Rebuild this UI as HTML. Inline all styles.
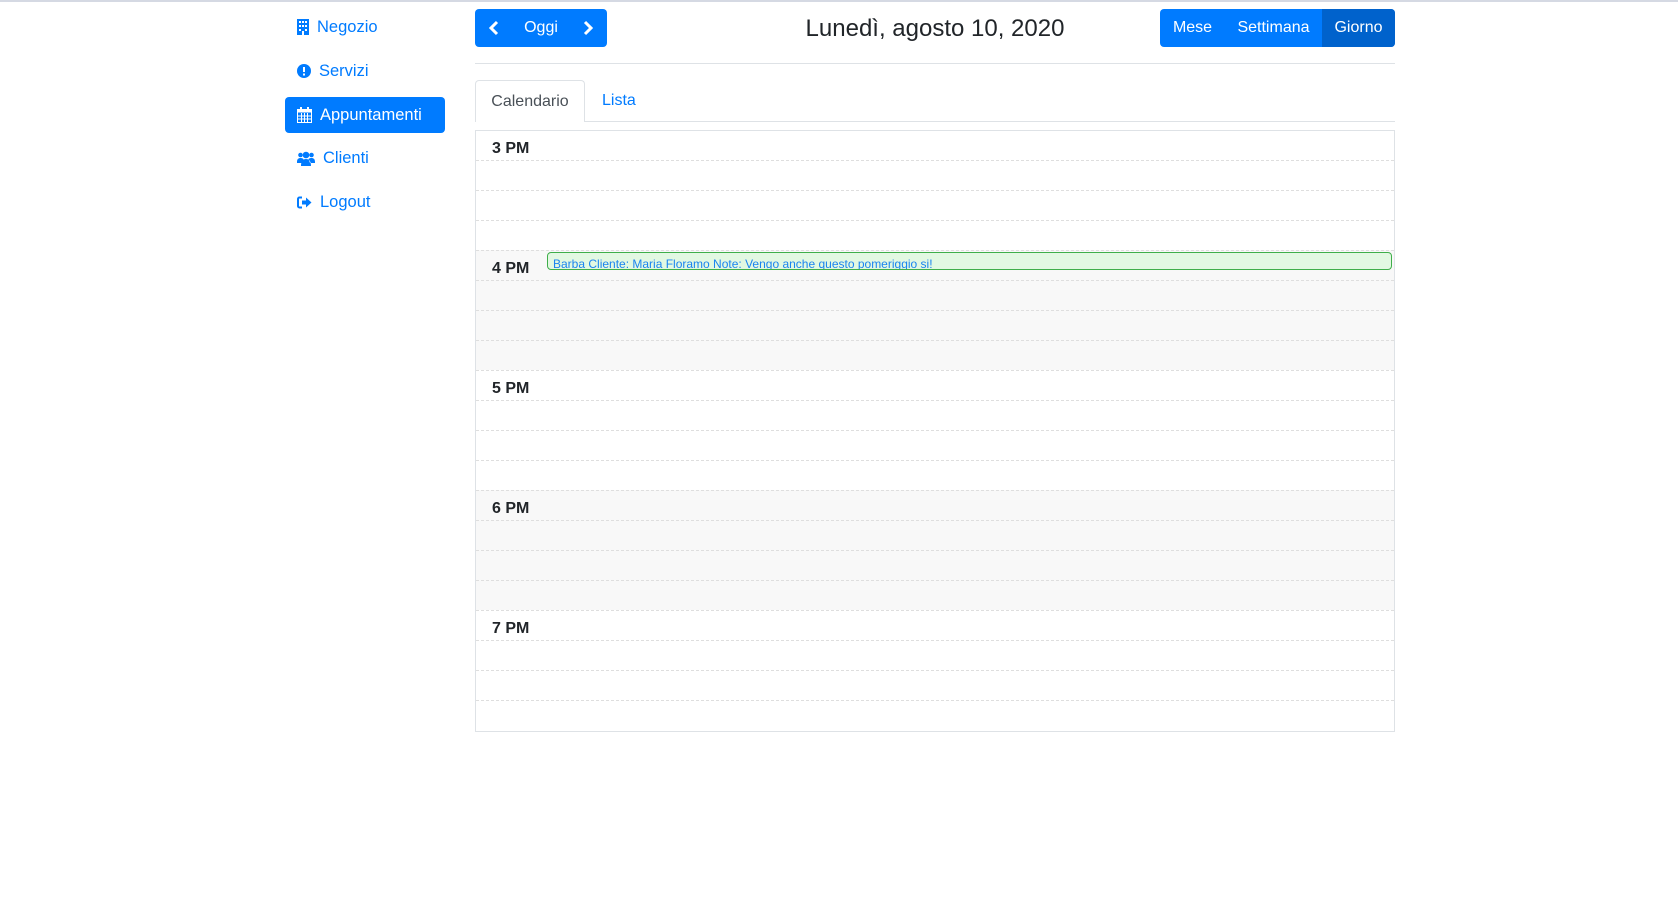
<!DOCTYPE html>
<html><head><meta charset="utf-8"><style>
*{box-sizing:border-box;margin:0;padding:0}
body{width:1678px;height:909px;background:#fff;font-family:"Liberation Sans",sans-serif;position:relative;overflow:hidden}
.a{position:absolute}
.nav{left:285px;width:160px;height:36px;color:#007bff;font-size:16.5px;display:flex;align-items:center;padding-left:12px;border-radius:4px}
.nav svg{margin-right:8px}
.btn{background:#007bff;color:#fff;font-size:16px;display:flex;align-items:center;border-radius:4px}
.row{position:absolute;left:0;right:0;height:0;border-top:1px dashed #dedede}
.lab{position:absolute;left:16px;font-weight:bold;font-size:16px;color:#212529}
</style></head><body>
<div class="a" style="left:0;top:0;width:1678px;height:2px;background:#d5d9e3"></div>
<div class="a nav" style="top:9px"><svg width="12" height="16" viewBox="0 0 12 16"><rect x="0" y="0" width="12" height="16" fill="#007bff"/><g fill="#fff"><rect x="2" y="2" width="2" height="2"/><rect x="5" y="2" width="2" height="2"/><rect x="8" y="2" width="2" height="2"/><rect x="2" y="6" width="2" height="2"/><rect x="5" y="6" width="2" height="2"/><rect x="8" y="6" width="2" height="2"/><rect x="2" y="10" width="2" height="2"/><rect x="8" y="10" width="2" height="2"/><rect x="5" y="12" width="2" height="4"/></g></svg>Negozio</div>
<div class="a nav" style="top:53px"><svg width="14" height="14" viewBox="0 0 14 14"><circle cx="7" cy="7" r="7" fill="#007bff"/><rect x="6" y="3" width="2" height="5" fill="#fff"/><rect x="6" y="9.5" width="2" height="2" fill="#fff"/></svg>Servizi</div>
<div class="a nav" style="top:97px;background:#007bff;color:#fff"><svg width="15" height="16" viewBox="0 0 15 16"><rect x="0.5" y="2.5" width="14" height="13" fill="none" stroke="#fff"/><rect x="0.5" y="2.5" width="14" height="3" fill="#fff"/><rect x="3" y="0" width="2" height="4" fill="#fff"/><rect x="10" y="0" width="2" height="4" fill="#fff"/><path d="M4.5 6v9M7.5 6v9M10.5 6v9M1 9h13M1 12h13" stroke="#fff"/></svg>Appuntamenti</div>
<div class="a nav" style="top:140px"><svg width="18" height="15" viewBox="0 0 18 15"><g fill="#007bff"><circle cx="3.5" cy="4" r="2.3"/><circle cx="14.5" cy="4" r="2.3"/><circle cx="9" cy="4" r="3.3"/><path d="M0 11c0-3 1.5-4 3.5-4s3 1 3 1L5 12H0zM18 11c0-3-1.5-4-3.5-4s-3 1-3 1l1.5 4H18zM4 15c0-5 2-7 5-7s5 2 5 7z"/></g></svg>Clienti</div>
<div class="a nav" style="top:184px"><svg width="15" height="13" viewBox="0 0 15 13"><path d="M5 1.5H2.5a1.5 1.5 0 0 0-1.5 1.5v7a1.5 1.5 0 0 0 1.5 1.5H5" fill="none" stroke="#007bff" stroke-width="2"/><path d="M5 4.5h4V1.5L14.5 6.5 9 11.5V8.5H5z" fill="#007bff"/></svg>Logout</div>

<div class="a btn" style="left:475px;top:9px;width:132px;height:38px;justify-content:space-between;padding:0 14px">
<svg width="10" height="16" viewBox="0 0 10 16"><path d="M8 2L2 8l6 6" fill="none" stroke="#fff" stroke-width="3"/></svg><span>Oggi</span><svg width="10" height="16" viewBox="0 0 10 16"><path d="M2 2l6 6-6 6" fill="none" stroke="#fff" stroke-width="3"/></svg></div>
<div class="a" style="left:735px;width:400px;top:15px;text-align:center;font-size:24px;color:#212529">Lunedì, agosto 10, 2020</div>
<div class="a btn" style="left:1160px;top:9px;width:235px;height:38px;overflow:hidden">
<span style="width:65px;text-align:center">Mese</span><span style="width:97px;text-align:center">Settimana</span><span style="flex:1;height:100%;background:#0062cc;display:flex;align-items:center;justify-content:center">Giorno</span></div>
<div class="a" style="left:475px;width:920px;top:63px;border-top:1px solid #dee2e6"></div>
<div class="a" style="left:475px;width:920px;top:121px;border-top:1px solid #dee2e6"></div>
<div class="a" style="left:475px;top:80px;width:110px;height:42px;border:1px solid #dee2e6;border-bottom:none;border-radius:4px 4px 0 0;background:#fff;font-size:16px;color:#495057;display:flex;align-items:center;justify-content:center">Calendario</div>
<div class="a" style="left:602px;top:80px;height:42px;font-size:16px;color:#007bff;display:flex;align-items:center">Lista</div>

<div class="a" style="left:475px;top:130px;width:920px;height:602px;border:1px solid #dee2e6">
<div class="a" style="left:0;right:0;top:119px;height:120px;background:#f8f8f8"></div>
<div class="a" style="left:0;right:0;top:359px;height:120px;background:#f8f8f8"></div>
<div class="row" style="top:29px"></div><div class="row" style="top:59px"></div><div class="row" style="top:89px"></div><div class="row" style="top:119px"></div>
<div class="row" style="top:149px"></div><div class="row" style="top:179px"></div><div class="row" style="top:209px"></div><div class="row" style="top:239px"></div>
<div class="row" style="top:269px"></div><div class="row" style="top:299px"></div><div class="row" style="top:329px"></div><div class="row" style="top:359px"></div>
<div class="row" style="top:389px"></div><div class="row" style="top:419px"></div><div class="row" style="top:449px"></div><div class="row" style="top:479px"></div>
<div class="row" style="top:509px"></div><div class="row" style="top:539px"></div><div class="row" style="top:569px"></div>
<div class="lab" style="top:9px">3 PM</div>
<div class="lab" style="top:129px">4 PM</div>
<div class="lab" style="top:249px">5 PM</div>
<div class="lab" style="top:369px">6 PM</div>
<div class="lab" style="top:489px">7 PM</div>
<div class="a" style="left:71px;right:2px;top:121px;height:18px;background:#e2f8e2;border:1px solid #3fae4a;border-radius:4px;overflow:hidden;font-size:12px;color:#1a84f0;text-decoration:underline;padding:5px 0 0 5px;line-height:12px">Barba Cliente: Maria Floramo Note: Vengo anche questo pomeriggio si!</div>
</div>
</body></html>
